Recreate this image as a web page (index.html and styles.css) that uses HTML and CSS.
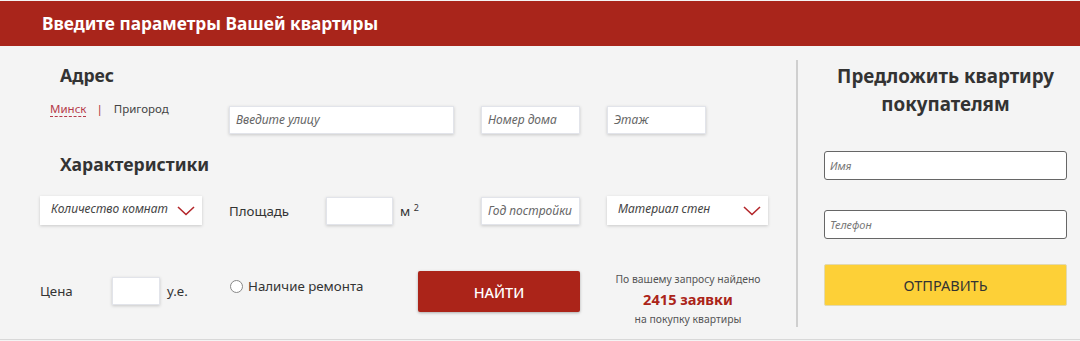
FILE: index.html
```html
<!DOCTYPE html>
<html lang="ru">
<head>
    <meta charset="UTF-8">
    <title>Параметры квартиры</title>
    <link rel="stylesheet" href="styles.css">
</head>
<body>
    <div class="header">Введите параметры Вашей квартиры</div>

    <div class="main">
        <!-- поиск -->
        <div class="search">
            <h2 class="title">Адрес</h2>
            <div class="row address-row">
                <div class="city">
                    <span class="city-active">Минск</span>
                    <span class="sep">|</span>
                    <span>Пригород</span>
                </div>
                <div class="field street">Введите улицу</div>
                <div class="field house">Номер дома</div>
                <div class="field floor">Этаж</div>
            </div>

            <h2 class="title">Характеристики</h2>
            <div class="row char-row">
                <div class="field select rooms">Количество комнат
                    <svg class="chevron" width="18" height="10" viewBox="0 0 18 10"><path d="M1 1 L9 8.5 L17 1" fill="none" stroke="#b3262a" stroke-width="1.6"/></svg>
                </div>
                <span class="label area-label">Площадь</span>
                <div class="field area"></div>
                <span class="label unit">м <sup>2</sup></span>
                <div class="field year">Год постройки</div>
                <div class="field select walls">Материал стен
                    <svg class="chevron" width="18" height="10" viewBox="0 0 18 10"><path d="M1 1 L9 8.5 L17 1" fill="none" stroke="#b3262a" stroke-width="1.6"/></svg>
                </div>
            </div>

            <div class="row bottom-row">
                <span class="label price-label">Цена</span>
                <div class="field price"></div>
                <span class="label currency">у.е.</span>
                <label class="repair"><span class="radio"></span>Наличие ремонта</label>
                <button class="btn-find">НАЙТИ</button>
                <div class="result">
                    <div>По вашему запросу найдено</div>
                    <div class="count">2415 заявки</div>
                    <div>на покупку квартиры</div>
                </div>
            </div>
        </div>

        <!-- заявка -->
        <div class="offer">
            <h2 class="offer-title">Предложить квартиру покупателям</h2>
            <div class="box">Имя</div>
            <div class="box">Телефон</div>
            <button class="btn-send">ОТПРАВИТЬ</button>
        </div>
    </div>
</body>
</html>
```

FILE: styles.css
```css
body {
    margin: 0;
    padding: 0;
    background: #f4f4f4;
    font-family: "Noto Sans", "Open Sans", sans-serif;
    color: #333;
    overflow: hidden;
}

.header {
    margin-top: 1px;
    height: 45px;
    line-height: 45px;
    background: #a9251b;
    color: #fff;
    font-weight: bold;
    font-size: 17.3px;
    padding-left: 42px;
}

.main {
    display: flex;
    height: 293px;
    border-bottom: 1px solid #d8d8d8;
}

/* левая часть */
.search {
    width: 796px;
    flex-shrink: 0;
}

.title {
    margin: 0;
    padding-left: 60px;
    font-size: 17.6px;
    font-weight: bold;
    color: #333;
    line-height: 24px;
}

.search > .title:first-child {
    padding-top: 17px;
}

.row {
    display: flex;
}

.row > * {
    flex-shrink: 0;
}

.address-row {
    align-items: flex-start;
    margin-top: 4px;
    height: 43px;
}

.city {
    width: 179px;
    padding-left: 50px;
    font-size: 11.5px;
    color: #444;
    line-height: 18px;
    margin-top: 9px;
}

.city-active {
    color: #b53a4a;
    border-bottom: 1px dashed #b53a4a;
}

.sep {
    margin: 0 8px 0 7px;
    color: #a33;
}

.field {
    box-sizing: border-box;
    height: 28px;
    background: #fff;
    border: 1px solid #e2e4ea;
    box-shadow: 0 1px 3px rgba(0, 0, 0, 0.18);
    font-style: italic;
    font-size: 12px;
    color: #666;
    line-height: 26px;
    padding-left: 6px;
}

.address-row .field {
    margin-top: 15px;
}

.street { width: 225px; }
.house { width: 99px; margin-left: 27px; }
.floor { width: 99px; margin-left: 27px; }

.address-row + .title {
    margin-top: 18px;
}

.char-row {
    align-items: center;
    margin-top: 20px;
}

.select {
    position: relative;
    height: 29px;
    border: none;
    padding-left: 11px;
    color: #444;
}

.chevron {
    position: absolute;
    right: 7px;
    top: 10px;
}

.rooms { width: 162px; margin-left: 40px; }

.label {
    font-size: 13.3px;
    color: #333;
}

.area-label { margin-left: 27px; width: 97px; }
.area { width: 67px; }
.unit { margin-left: 7px; width: 81px; align-self: flex-start; margin-top: 5px; }
.unit sup { font-size: 9px; }
.year { width: 99px; }
.walls { width: 161px; margin-left: 27px; }

.bottom-row {
    margin-top: 52px;
    align-items: flex-start;
}

.price-label { margin-left: 40px; width: 72px; margin-top: 5px; }
.price { width: 48px; }
.currency { margin-left: 7px; width: 63px; margin-top: 5px; }

.repair {
    display: flex;
    align-items: center;
    font-size: 13.3px;
    width: 188px;
    margin-top: 0;
}

.radio {
    box-sizing: border-box;
    width: 13px;
    height: 13px;
    border: 1px solid #888;
    border-radius: 50%;
    background: #fff;
    margin-right: 5px;
}

.btn-find {
    width: 162px;
    height: 41px;
    margin-top: -6px;
    background: #ab2419;
    border: none;
    border-radius: 2px;
    box-shadow: 0 1px 3px rgba(0, 0, 0, 0.3);
    color: #fff;
    font-family: inherit;
    font-size: 14.5px;
    font-weight: 500;
}

.result {
    width: 216px;
    text-align: center;
    font-size: 10.4px;
    color: #555;
    line-height: 20px;
    margin-top: -8px;
}

.result .count {
    font-size: 14.6px;
    font-weight: bold;
    color: #ab2419;
}

/* правая часть */
.offer {
    flex: 1;
    border-left: 2px solid #cfcfcf;
    margin: 14px 0 12px;
    padding: 0 0 0 26px;
}

.offer-title {
    margin: 2px 0 0 0;
    width: 243px;
    text-align: center;
    font-size: 18.8px;
    line-height: 28px;
    color: #333;
}

.box {
    box-sizing: border-box;
    width: 243px;
    height: 29px;
    margin-top: 30px;
    background: #fff;
    border: 1px solid #666;
    border-radius: 3px;
    font-size: 11px;
    font-style: italic;
    color: #777;
    line-height: 27px;
    padding-left: 5px;
}

.offer-title + .box { margin-top: 33px; }

.btn-send {
    display: block;
    width: 243px;
    height: 42px;
    margin-top: 25px;
    background: #fdd037;
    border: 1px solid #e2d9b0;
    border-radius: 2px;
    font-family: inherit;
    font-size: 14.5px;
    color: #333;
}
```
